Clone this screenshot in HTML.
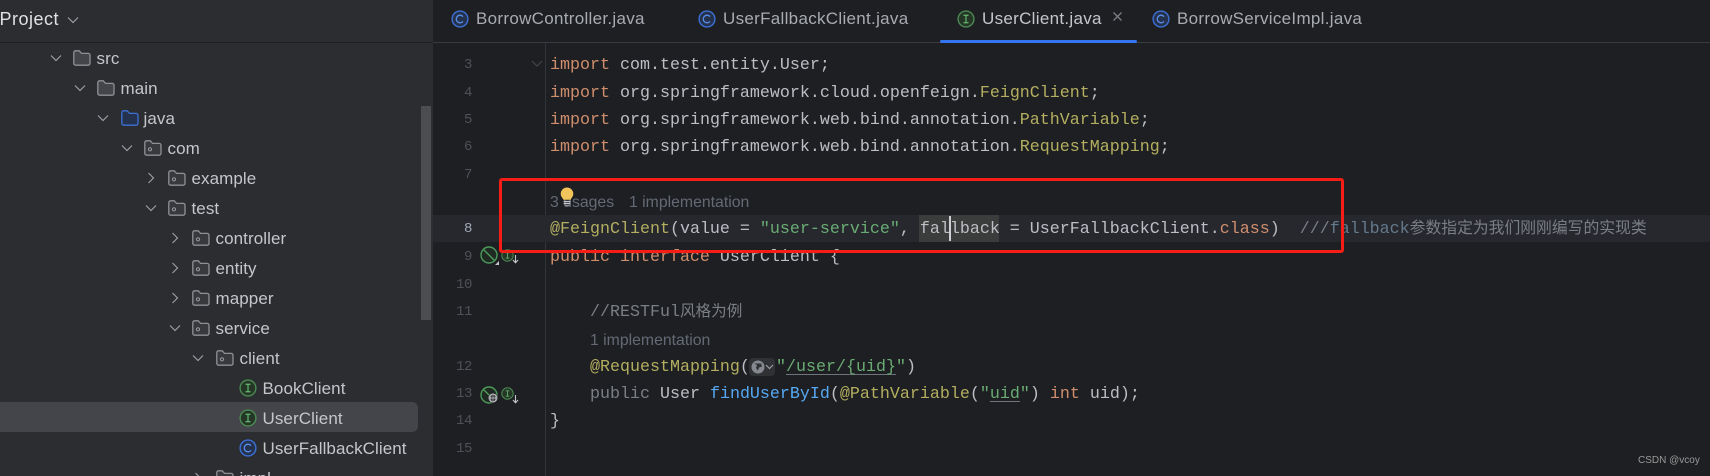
<!DOCTYPE html>
<html><head><meta charset="utf-8">
<style>
html,body{margin:0;padding:0;background:#1e1f22}
#r{position:relative;width:1710px;height:476px;overflow:hidden;background:#1e1f22;font-family:"Liberation Sans","Noto Sans CJK SC",sans-serif}
.a{position:absolute}
.t{position:absolute;white-space:nowrap;color:#c4c6cc;font-size:17px;letter-spacing:.08px;line-height:30px;height:30px;margin:1px 0 0 .5px}
.tab{position:absolute;white-space:nowrap;color:#a8abb2;font-size:17px;letter-spacing:.3px;line-height:24px;top:7px}
.c{position:absolute;left:550px;white-space:pre;font-family:"Liberation Mono","Noto Sans CJK SC",monospace;font-size:16.67px;line-height:28px;height:28px;color:#bcbec4;margin-top:2px}
.n{position:absolute;width:40px;left:432px;text-align:right;font-family:"Liberation Mono",monospace;font-size:14px;letter-spacing:-.4px;line-height:28px;color:#4e5157;margin-top:1px}
.k{color:#cf8e6d}.y{color:#b3ae60}.g{color:#6aab73}.m{color:#7a7e85}.f{color:#56a8f5}
.z{font-size:16px;line-height:0;font-family:"Noto Sans CJK SC",sans-serif}
.i{position:absolute;white-space:nowrap;font-size:15.8px;line-height:20px;color:#646a75}
svg{position:absolute;overflow:visible}
#s svg{margin-top:1px}
u{text-decoration-color:#6f737a;text-underline-offset:3px}
</style></head><body>
<div id="r">
<svg width="0" height="0" style="position:absolute"><defs>
<symbol id="fo" viewBox="0 0 18 16" overflow="visible"><path d="M.8 2.6A1.8 1.8 0 0 1 2.6.8h3.6l2.4 2.6h6.6a1.8 1.8 0 0 1 1.8 1.8v8.2a1.8 1.8 0 0 1-1.8 1.8H2.6a1.8 1.8 0 0 1-1.8-1.8z" fill="#43454a" stroke="#8f9196" stroke-width="1.3"/></symbol>
<symbol id="fj" viewBox="0 0 18 16" overflow="visible"><path d="M.8 2.6A1.8 1.8 0 0 1 2.6.8h3.6l2.4 2.6h6.6a1.8 1.8 0 0 1 1.8 1.8v8.2a1.8 1.8 0 0 1-1.8 1.8H2.6a1.8 1.8 0 0 1-1.8-1.8z" fill="#25324d" stroke="#3d70d6" stroke-width="1.3"/></symbol>
<symbol id="fp" viewBox="0 0 18 16" overflow="visible"><path d="M.8 2.6A1.8 1.8 0 0 1 2.6.8h3.6l2.4 2.6h6.6a1.8 1.8 0 0 1 1.8 1.8v8.2a1.8 1.8 0 0 1-1.8 1.8H2.6a1.8 1.8 0 0 1-1.8-1.8z" fill="#38393d" stroke="#8f9196" stroke-width="1.3"/><circle cx="6" cy="9.3" r="1.6" fill="none" stroke="#9a9ca1" stroke-width="1"/></symbol>
<symbol id="cd" viewBox="0 0 12 12" overflow="visible"><path d="M1 3.5l5 5 5-5" fill="none" stroke="#9a9da3" stroke-width="1.2"/></symbol>
<symbol id="cr" viewBox="0 0 12 12" overflow="visible"><path d="M3.5 1l5 5-5 5" fill="none" stroke="#9a9da3" stroke-width="1.2"/></symbol>
<symbol id="ii" viewBox="0 0 18 18" overflow="visible"><circle cx="9" cy="9" r="7.9" fill="#253627" stroke="#4b8a53" stroke-width="1.4"/><path d="M6.5 5.3h5M6.5 12.7h5M9 5.3v7.4" stroke="#5fae69" stroke-width="1.3" fill="none"/></symbol>
<symbol id="ic" viewBox="0 0 18 18" overflow="visible"><circle cx="9" cy="9" r="7.9" fill="#25324d" stroke="#3d70d6" stroke-width="1.4"/><path d="M12 6.6A3.8 3.8 0 1 0 12 11.4" stroke="#5a8ee8" stroke-width="1.3" fill="none"/></symbol>
</defs></svg>

<!-- sidebar -->
<div id="s">
<div class="a" style="left:0;top:0;width:433px;height:476px;background:#2b2d30"></div>
<div class="a" style="left:0;top:42px;width:433px;height:1px;background:#1e1f22"></div>
<div class="t" style="left:-1px;top:3px;font-size:18px;letter-spacing:.5px;color:#dfe1e5">Project</div>
<svg style="left:67px;top:13px" width="12" height="12"><use href="#cd" width="12" height="12"/></svg>

<div class="a" style="left:0;top:402px;width:418px;height:30px;background:#43454a;border-radius:0 6px 6px 0"></div>
<div class="a" style="left:421px;top:106px;width:10px;height:214px;background:#4c4d50"></div>

<svg style="left:50px;top:51px" width="12" height="12"><use href="#cd" width="12" height="12"/></svg>
<svg style="left:73px;top:49px" width="18" height="16"><use href="#fo" width="18" height="16"/></svg>
<div class="t" style="left:96px;top:43px">src</div>

<svg style="left:74px;top:81px" width="12" height="12"><use href="#cd" width="12" height="12"/></svg>
<svg style="left:97px;top:79px" width="18" height="16"><use href="#fo" width="18" height="16"/></svg>
<div class="t" style="left:120px;top:73px">main</div>

<svg style="left:97px;top:111px" width="12" height="12"><use href="#cd" width="12" height="12"/></svg>
<svg style="left:121px;top:109px" width="18" height="16"><use href="#fj" width="18" height="16"/></svg>
<div class="t" style="left:143px;top:103px">java</div>

<svg style="left:121px;top:141px" width="12" height="12"><use href="#cd" width="12" height="12"/></svg>
<svg style="left:144px;top:139px" width="18" height="16"><use href="#fp" width="18" height="16"/></svg>
<div class="t" style="left:167px;top:133px">com</div>

<svg style="left:145px;top:171px" width="12" height="12"><use href="#cr" width="12" height="12"/></svg>
<svg style="left:168px;top:169px" width="18" height="16"><use href="#fp" width="18" height="16"/></svg>
<div class="t" style="left:191px;top:163px">example</div>

<svg style="left:145px;top:201px" width="12" height="12"><use href="#cd" width="12" height="12"/></svg>
<svg style="left:168px;top:199px" width="18" height="16"><use href="#fp" width="18" height="16"/></svg>
<div class="t" style="left:191px;top:193px">test</div>

<svg style="left:169px;top:231px" width="12" height="12"><use href="#cr" width="12" height="12"/></svg>
<svg style="left:192px;top:229px" width="18" height="16"><use href="#fp" width="18" height="16"/></svg>
<div class="t" style="left:215px;top:223px">controller</div>

<svg style="left:169px;top:261px" width="12" height="12"><use href="#cr" width="12" height="12"/></svg>
<svg style="left:192px;top:259px" width="18" height="16"><use href="#fp" width="18" height="16"/></svg>
<div class="t" style="left:215px;top:253px">entity</div>

<svg style="left:169px;top:291px" width="12" height="12"><use href="#cr" width="12" height="12"/></svg>
<svg style="left:192px;top:289px" width="18" height="16"><use href="#fp" width="18" height="16"/></svg>
<div class="t" style="left:215px;top:283px">mapper</div>

<svg style="left:169px;top:321px" width="12" height="12"><use href="#cd" width="12" height="12"/></svg>
<svg style="left:192px;top:319px" width="18" height="16"><use href="#fp" width="18" height="16"/></svg>
<div class="t" style="left:215px;top:313px">service</div>

<svg style="left:192px;top:351px" width="12" height="12"><use href="#cd" width="12" height="12"/></svg>
<svg style="left:216px;top:349px" width="18" height="16"><use href="#fp" width="18" height="16"/></svg>
<div class="t" style="left:239px;top:343px">client</div>

<svg style="left:239px;top:378px" width="18" height="18"><use href="#ii" width="18" height="18"/></svg>
<div class="t" style="left:262px;top:373px">BookClient</div>
<svg style="left:239px;top:408px" width="18" height="18"><use href="#ii" width="18" height="18"/></svg>
<div class="t" style="left:262px;top:403px">UserClient</div>
<svg style="left:239px;top:438px" width="18" height="18"><use href="#ic" width="18" height="18"/></svg>
<div class="t" style="left:262px;top:433px">UserFallbackClient</div>

<svg style="left:192px;top:471px" width="12" height="12"><use href="#cr" width="12" height="12"/></svg>
<svg style="left:216px;top:469px" width="18" height="16"><use href="#fp" width="18" height="16"/></svg>
<div class="t" style="left:239px;top:463px">impl</div>
</div>

<!-- tabs -->
<div class="a" style="left:433px;top:42px;width:1277px;height:1px;background:#393b40"></div>
<svg style="left:451px;top:10px" width="18" height="18"><use href="#ic" width="18" height="18"/></svg>
<div class="tab" style="left:476px">BorrowController.java</div>
<svg style="left:698px;top:10px" width="18" height="18"><use href="#ic" width="18" height="18"/></svg>
<div class="tab" style="left:723px">UserFallbackClient.java</div>
<svg style="left:957px;top:10px" width="18" height="18"><use href="#ii" width="18" height="18"/></svg>
<div class="tab" style="left:982px;color:#c4c6cc">UserClient.java</div>
<svg style="left:1113px;top:12px" width="9" height="9"><path d="M.5.5l8 8M8.5.5l-8 8" stroke="#7b7e84" stroke-width="1.3"/></svg>
<svg style="left:1152px;top:10px" width="18" height="18"><use href="#ic" width="18" height="18"/></svg>
<div class="tab" style="left:1177px">BorrowServiceImpl.java</div>
<div class="a" style="left:940px;top:40px;width:197px;height:3px;background:#3574f0;border-radius:2px"></div>

<!-- editor -->
<div class="a" style="left:545px;top:43px;width:1px;height:433px;background:#313438"></div>
<div class="a" style="left:433px;top:215px;width:1277px;height:27px;background:#26282e"></div>
<div class="a" style="left:919px;top:215px;width:80px;height:27px;background:#3a3d3b"></div>
<svg style="left:531px;top:60px" width="12" height="8"><path d="M1 1l5 5 5-5" fill="none" stroke="#43454a" stroke-width="1.2"/></svg>

<div class="n" style="top:50px">3</div>
<div class="n" style="top:78px">4</div>
<div class="n" style="top:105px">5</div>
<div class="n" style="top:132px">6</div>
<div class="n" style="top:160px">7</div>
<div class="n" style="top:214px;color:#a1a9b5">8</div>
<div class="n" style="top:242px">9</div>
<div class="n" style="top:270px">10</div>
<div class="n" style="top:297px">11</div>
<div class="n" style="top:352px">12</div>
<div class="n" style="top:379px">13</div>
<div class="n" style="top:406px">14</div>
<div class="n" style="top:434px">15</div>

<div class="c" style="top:50px"><span class="k">import</span> com.test.entity.User;</div>
<div class="c" style="top:78px"><span class="k">import</span> org.springframework.cloud.openfeign.<span class="y">FeignClient</span>;</div>
<div class="c" style="top:105px"><span class="k">import</span> org.springframework.web.bind.annotation.<span class="y">PathVariable</span>;</div>
<div class="c" style="top:132px"><span class="k">import</span> org.springframework.web.bind.annotation.<span class="y">RequestMapping</span>;</div>

<div class="i" style="left:550px;top:193px">3 usages</div>
<div class="i" style="left:629px;top:193px">1 implementation</div>

<div class="c" style="top:214px"><span class="y">@FeignClient</span>(value = <span class="g">"user-service"</span>, fallback = UserFallbackClient.<span class="k">class</span>)  <span class="m">///<span style="color:#64798b">fallback</span><span class="z" style="font-size:15.8px">参数指定为我们刚刚编写的实现类</span></span></div>
<div class="a" style="left:949px;top:216px;width:2px;height:25px;background:#ced0d6"></div>
<div class="c" style="top:242px"><span class="k">public interface</span> UserClient {</div>
<div class="c" style="top:297px">    <span class="m">//RESTFul<span class="z" style="font-size:15.6px">风格为例</span></span></div>
<div class="i" style="left:590px;top:331px">1 implementation</div>
<div class="a" style="left:749px;top:358px;width:26px;height:18px;background:#2f3135;border-radius:4px"></div>
<svg style="left:751px;top:360px" width="14" height="14"><circle cx="7" cy="7" r="6.5" fill="#85888e"/><path d="M3 3.5l3 1.5-1 3 2 2.5 1-3 3-1-1-3" fill="#2f3135"/></svg>
<svg style="left:765px;top:364px" width="9" height="6"><path d="M1 1l3.5 3.5L8 1" fill="none" stroke="#9a9da3" stroke-width="1.2"/></svg>
<div class="c" style="top:352px">    <span class="y">@RequestMapping</span>(</div>
<div class="c" style="top:352px;left:776px"><span class="g">"<u>/user/{uid}</u>"</span>)</div>
<div class="c" style="top:379px">    <span class="m">public</span> User <span class="f">findUserById</span>(<span class="y">@PathVariable</span>(<span class="g">"<u>uid</u>"</span>) <span class="k">int</span> uid);</div>
<div class="c" style="top:406px">}</div>

<!-- gutter icons line 9 -->
<svg style="left:480px;top:246px" width="18" height="18"><circle cx="9" cy="9" r="8" fill="#1f2a22" stroke="#4d9a5a" stroke-width="1.4"/><path d="M3.5 3.5l11 11" stroke="#4d9a5a" stroke-width="1.4"/></svg>
<svg style="left:495px;top:261px" width="4" height="4"><path d="M4 0v4H0z" fill="#c4c6cc"/></svg>
<svg style="left:501px;top:249px" width="13" height="13"><use href="#ii" width="13" height="13"/></svg>
<svg style="left:512px;top:255px" width="7" height="9"><path d="M3.5 0v7.5M1 5l2.5 2.8L6 5" fill="none" stroke="#c4c6cc" stroke-width="1.1"/></svg>
<!-- gutter icons line 13 -->
<svg style="left:480px;top:386px" width="18" height="18"><circle cx="9" cy="9" r="8" fill="#1f2a22" stroke="#4d9a5a" stroke-width="1.4"/><path d="M3.5 3.5l11 11" stroke="#4d9a5a" stroke-width="1.4"/></svg>
<svg style="left:488px;top:393px" width="10" height="10"><circle cx="5" cy="5" r="5" fill="#1e1f22"/><circle cx="5" cy="5" r="4" fill="none" stroke="#d0d2d6" stroke-width=".9"/><path d="M1 5h8M5 1v8M3.2 1.3q-1 3.7 0 7.4M6.8 1.3q1 3.7 0 7.4" fill="none" stroke="#d0d2d6" stroke-width=".7"/></svg>
<svg style="left:501px;top:387px" width="13" height="13"><use href="#ii" width="13" height="13"/></svg>
<svg style="left:512px;top:395px" width="7" height="9"><path d="M3.5 0v7.5M1 5l2.5 2.8L6 5" fill="none" stroke="#c4c6cc" stroke-width="1.1"/></svg>

<!-- bulb -->
<svg style="left:558px;top:187px" width="18" height="22"><path d="M9 .5a6.3 6.3 0 0 0-6.3 6.3c0 2.6 1.7 4 2.8 6h7c1.1-2 2.8-3.4 2.8-6A6.3 6.3 0 0 0 9 .5z" fill="#f2c55c"/><path d="M5.6 14.5h6.8M5.6 16.5h6.8" stroke="#c9ccd2" stroke-width="1.3"/><path d="M6.5 18.5h5" stroke="#8b8d92" stroke-width="1.3"/></svg>

<!-- red annotation -->
<div class="a" style="left:499px;top:178px;width:839px;height:69px;border:3px solid #f51d15;border-radius:3px"></div>

<div class="a" style="left:1638px;top:454px;font-size:10px;line-height:14px;color:#9a9a9a;white-space:nowrap">CSDN @vcoy</div>
</div>
</body></html>
